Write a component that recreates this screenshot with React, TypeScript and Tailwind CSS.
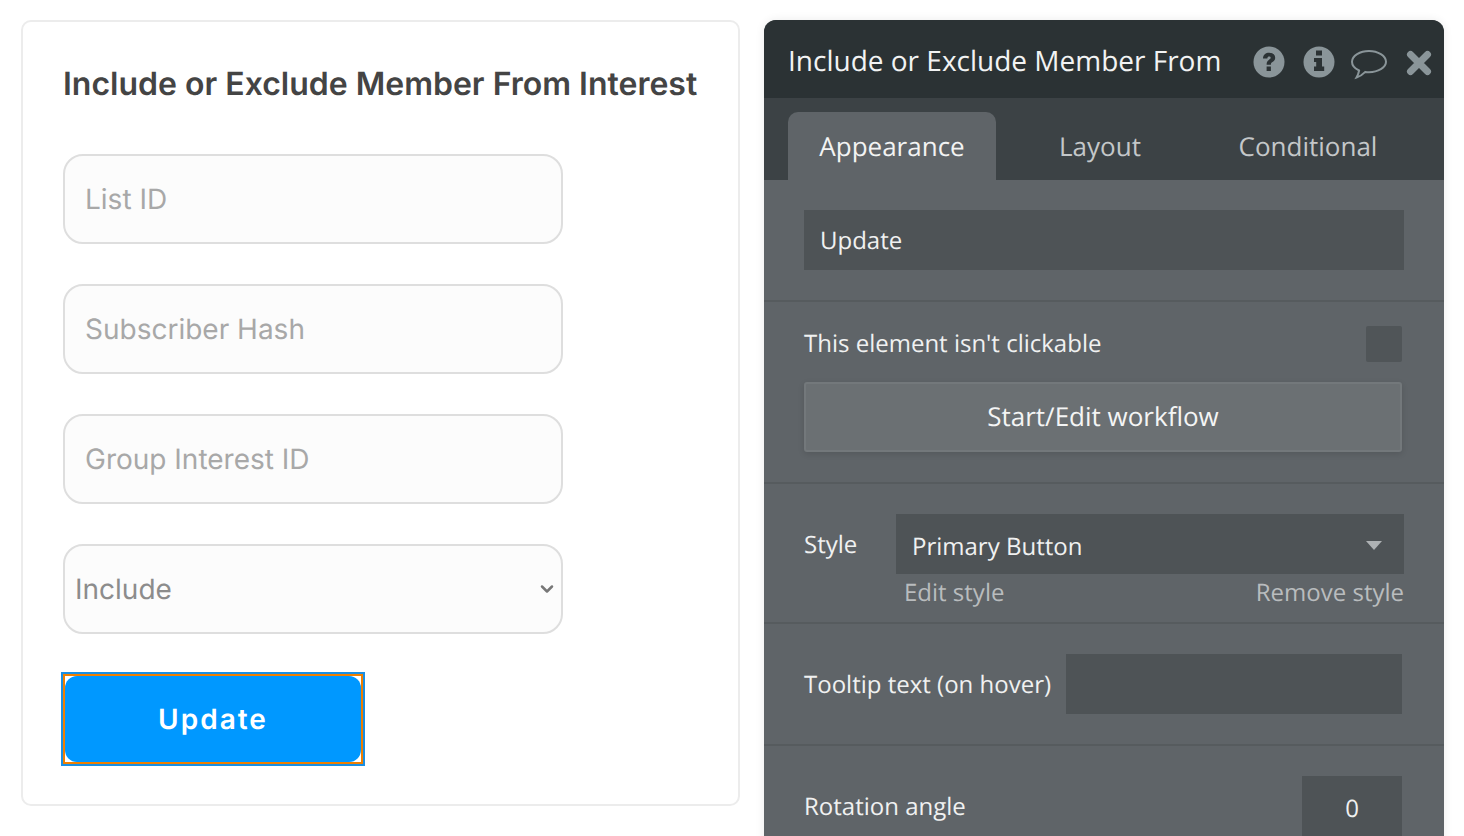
import { ChevronDown } from 'lucide-react'

const inter = { fontFamily: 'Inter, sans-serif' }

function TextField({ placeholder }: { placeholder: string }) {
  return (
    <div className="flex h-[90px] w-[500px] items-center rounded-[20px] border-2 border-[#dedede] bg-[#fcfcfc] pl-[20px] text-[28px] text-[#a8a8a8]">
      {placeholder}
    </div>
  )
}

function Divider() {
  return <div className="h-[2px] bg-[#565b5e]" />
}

export default function App() {
  return (
    <div className="flex h-[836px] w-[1464px] items-start gap-6 overflow-hidden bg-white pl-[21px] pt-5 [text-rendering:geometricPrecision]">
      {/* 왼쪽 미리보기 카드 */}
      <div className="h-[786px] w-[719px] rounded-[10px] border-2 border-[#ececec] pl-10 pt-[40px]" style={inter}>
        <h1 className="whitespace-nowrap text-[32px] font-semibold leading-[44px] text-[#444444]">
          Include or Exclude Member From Interest
        </h1>
        <div className="mt-[48px] flex flex-col gap-10">
          <TextField placeholder="List ID" />
          <TextField placeholder="Subscriber Hash" />
          <TextField placeholder="Group Interest ID" />
          <div className="flex h-[90px] w-[500px] items-center justify-between rounded-[20px] border-2 border-[#dedede] bg-[#fcfcfc] pl-[10px] pr-[4px] text-[28px] text-[#8c8c8c]">
            Include
            <ChevronDown size={20} strokeWidth={3} color="#777777" />
          </div>
        </div>
        <div className="ml-[-2px] mt-[38px] h-[94px] w-[304px] border-2 border-[#1b8fe3]">
          <div className="h-full w-full border-2 border-[#f07f00] bg-white">
            <div className="flex h-full w-full items-center justify-center rounded-[12px] bg-[#0098ff] text-[28px] font-semibold tracking-[2px] text-white">
              Update
            </div>
          </div>
        </div>
      </div>

      {/* 오른쪽 속성 패널 */}
      <div className="h-[900px] w-[680px] overflow-hidden rounded-t-xl bg-[#5f6468] text-white shadow-[0_0_10px_rgba(0,0,0,0.08)] [font-family:'Open_Sans',sans-serif]">
        <div className="flex h-[78px] items-center justify-between bg-[#2b3234] pl-6 pr-[11px]">
          <span className="whitespace-nowrap pt-[4px] text-[28px] text-[#f2f3f3]">Include or Exclude Member From</span>
          <div className="flex items-center gap-[16px] pt-[5px]">
            <svg width="34" height="34" viewBox="0 0 34 34">
              <circle cx="17" cy="17" r="15.500" fill="#8a9599" />
              <path d="M11 13.500c0-3.700 2.800-5.700 6.200-5.700 3.500 0 6 2 6 5 0 2.200-1.100 3.300-2.700 4.300-1.200.8-1.600 1.200-1.600 2.600h-4.300c0-2.700.7-3.800 2.500-5 1.100-.8 1.600-1.200 1.600-1.900 0-.9-.7-1.400-1.600-1.400-1 0-1.700.6-1.800 2.100z" fill="#2b3234" />
              <rect x="14.600" y="21.500" width="4.300" height="4.500" fill="#2b3234" />
            </svg>
            <svg width="34" height="34" viewBox="0 0 34 34">
              <circle cx="17" cy="17" r="15.500" fill="#8a9599" />
              <rect x="14" y="5.500" width="6" height="5" fill="#2b3234" />
              <path d="M12 13h8v8.500h2.200V26H12v-4.500h2.200V17H12z" fill="#2b3234" />
            </svg>
            <svg className="-ml-px mt-[6px]" width="36" height="32" viewBox="0 0 36 32">
              <path d="M18 2C9 2 1 6.800 1 12.800c0 3.700 2.800 6.800 7.100 8.700-.4 2.400-1.200 4.600-2.600 7 3.500-1.100 6.500-3.200 8.800-5.600 1.200.2 2.400.3 3.700.3 9 0 17-4.500 17-10.400S27 2 18 2z" fill="none" stroke="#8a9599" strokeWidth="2" />
            </svg>
            <svg className="ml-[2px] mt-[2px]" width="28" height="28" viewBox="0 0 28 28">
              <path d="M5.500 5.500l17 17M22.500 5.500l-17 17" stroke="#8a9599" strokeWidth="7" strokeLinecap="round" />
            </svg>
          </div>
        </div>

        <div className="flex h-[82px] items-end bg-[#3c4245] pl-6">
          <div className="flex h-[68px] w-[208px] items-center justify-center rounded-t-[10px] bg-[#5f6468] pt-[1px] text-[26px] text-[#f2f3f3]">
            Appearance
          </div>
          <div className="flex h-[68px] w-[208px] items-center justify-center pt-[1px] text-[26px] text-[#c4c7c9]">Layout</div>
          <div className="flex h-[68px] w-[208px] items-center justify-center pt-[1px] text-[26px] text-[#c4c7c9]">Conditional</div>
        </div>

        <div className="px-10 py-[30px]">
          <div className="flex h-[60px] items-center bg-[#4e5356] pl-4 pt-[2px] text-[24px] text-[#f0f1f1]">Update</div>
        </div>
        <Divider />

        <div className="px-10 pb-[30px] pt-6">
          <div className="flex h-[36px] items-center justify-between pr-[2px] text-[24px] text-[#f0f1f1]">
            This element isn't clickable
            <div className="h-9 w-9 rounded-[2px] bg-[#505558]" />
          </div>
          <div className="mr-[2px] mt-5 flex h-[70px] items-center justify-center rounded-[3px] border-2 border-[#73787b] bg-[#6b7073] pb-[2px] text-[26px] text-[#f4f5f5] shadow-[0_2px_6px_rgba(0,0,0,0.12)]">
            Start/Edit workflow
          </div>
        </div>
        <Divider />

        <div className="px-10 pb-[13px] pt-[30px]">
          <div className="flex items-start">
            <span className="w-[92px] pt-[13px] text-[24px] leading-[36px] text-[#f0f1f1]">Style</span>
            <div className="flex h-[60px] flex-1 items-center justify-between bg-[#4e5356] pl-4 pr-[22px] pt-[6px] text-[24px] text-[#f0f1f1]">
              Primary Button
              <div className="mb-[4px] h-0 w-0 border-x-[8px] border-t-[9px] border-x-transparent border-t-[#aeb2b4]" />
            </div>
          </div>
          <div className="ml-[100px] mt-[3px] flex justify-between text-[24px] leading-[32px] text-[#b9bcbe]">
            <span>Edit style</span>
            <span>Remove style</span>
          </div>
        </div>
        <Divider />

        <div className="flex items-center justify-between py-[30px] pl-10 pr-[42px]">
          <span className="pt-[2px] text-[24px] text-[#f0f1f1]">Tooltip text (on hover)</span>
          <div className="h-[60px] w-[336px] bg-[#4e5356]" />
        </div>
        <Divider />

        <div className="flex items-start justify-between pb-[30px] pl-10 pr-[42px] pt-[30px]">
          <span className="pt-[13px] text-[24px] leading-[36px] text-[#f0f1f1]">Rotation angle</span>
          <div className="flex h-[66px] w-[100px] items-center justify-center bg-[#4e5356] text-[24px] text-[#f0f1f1]">0</div>
        </div>
      </div>
    </div>
  )
}
